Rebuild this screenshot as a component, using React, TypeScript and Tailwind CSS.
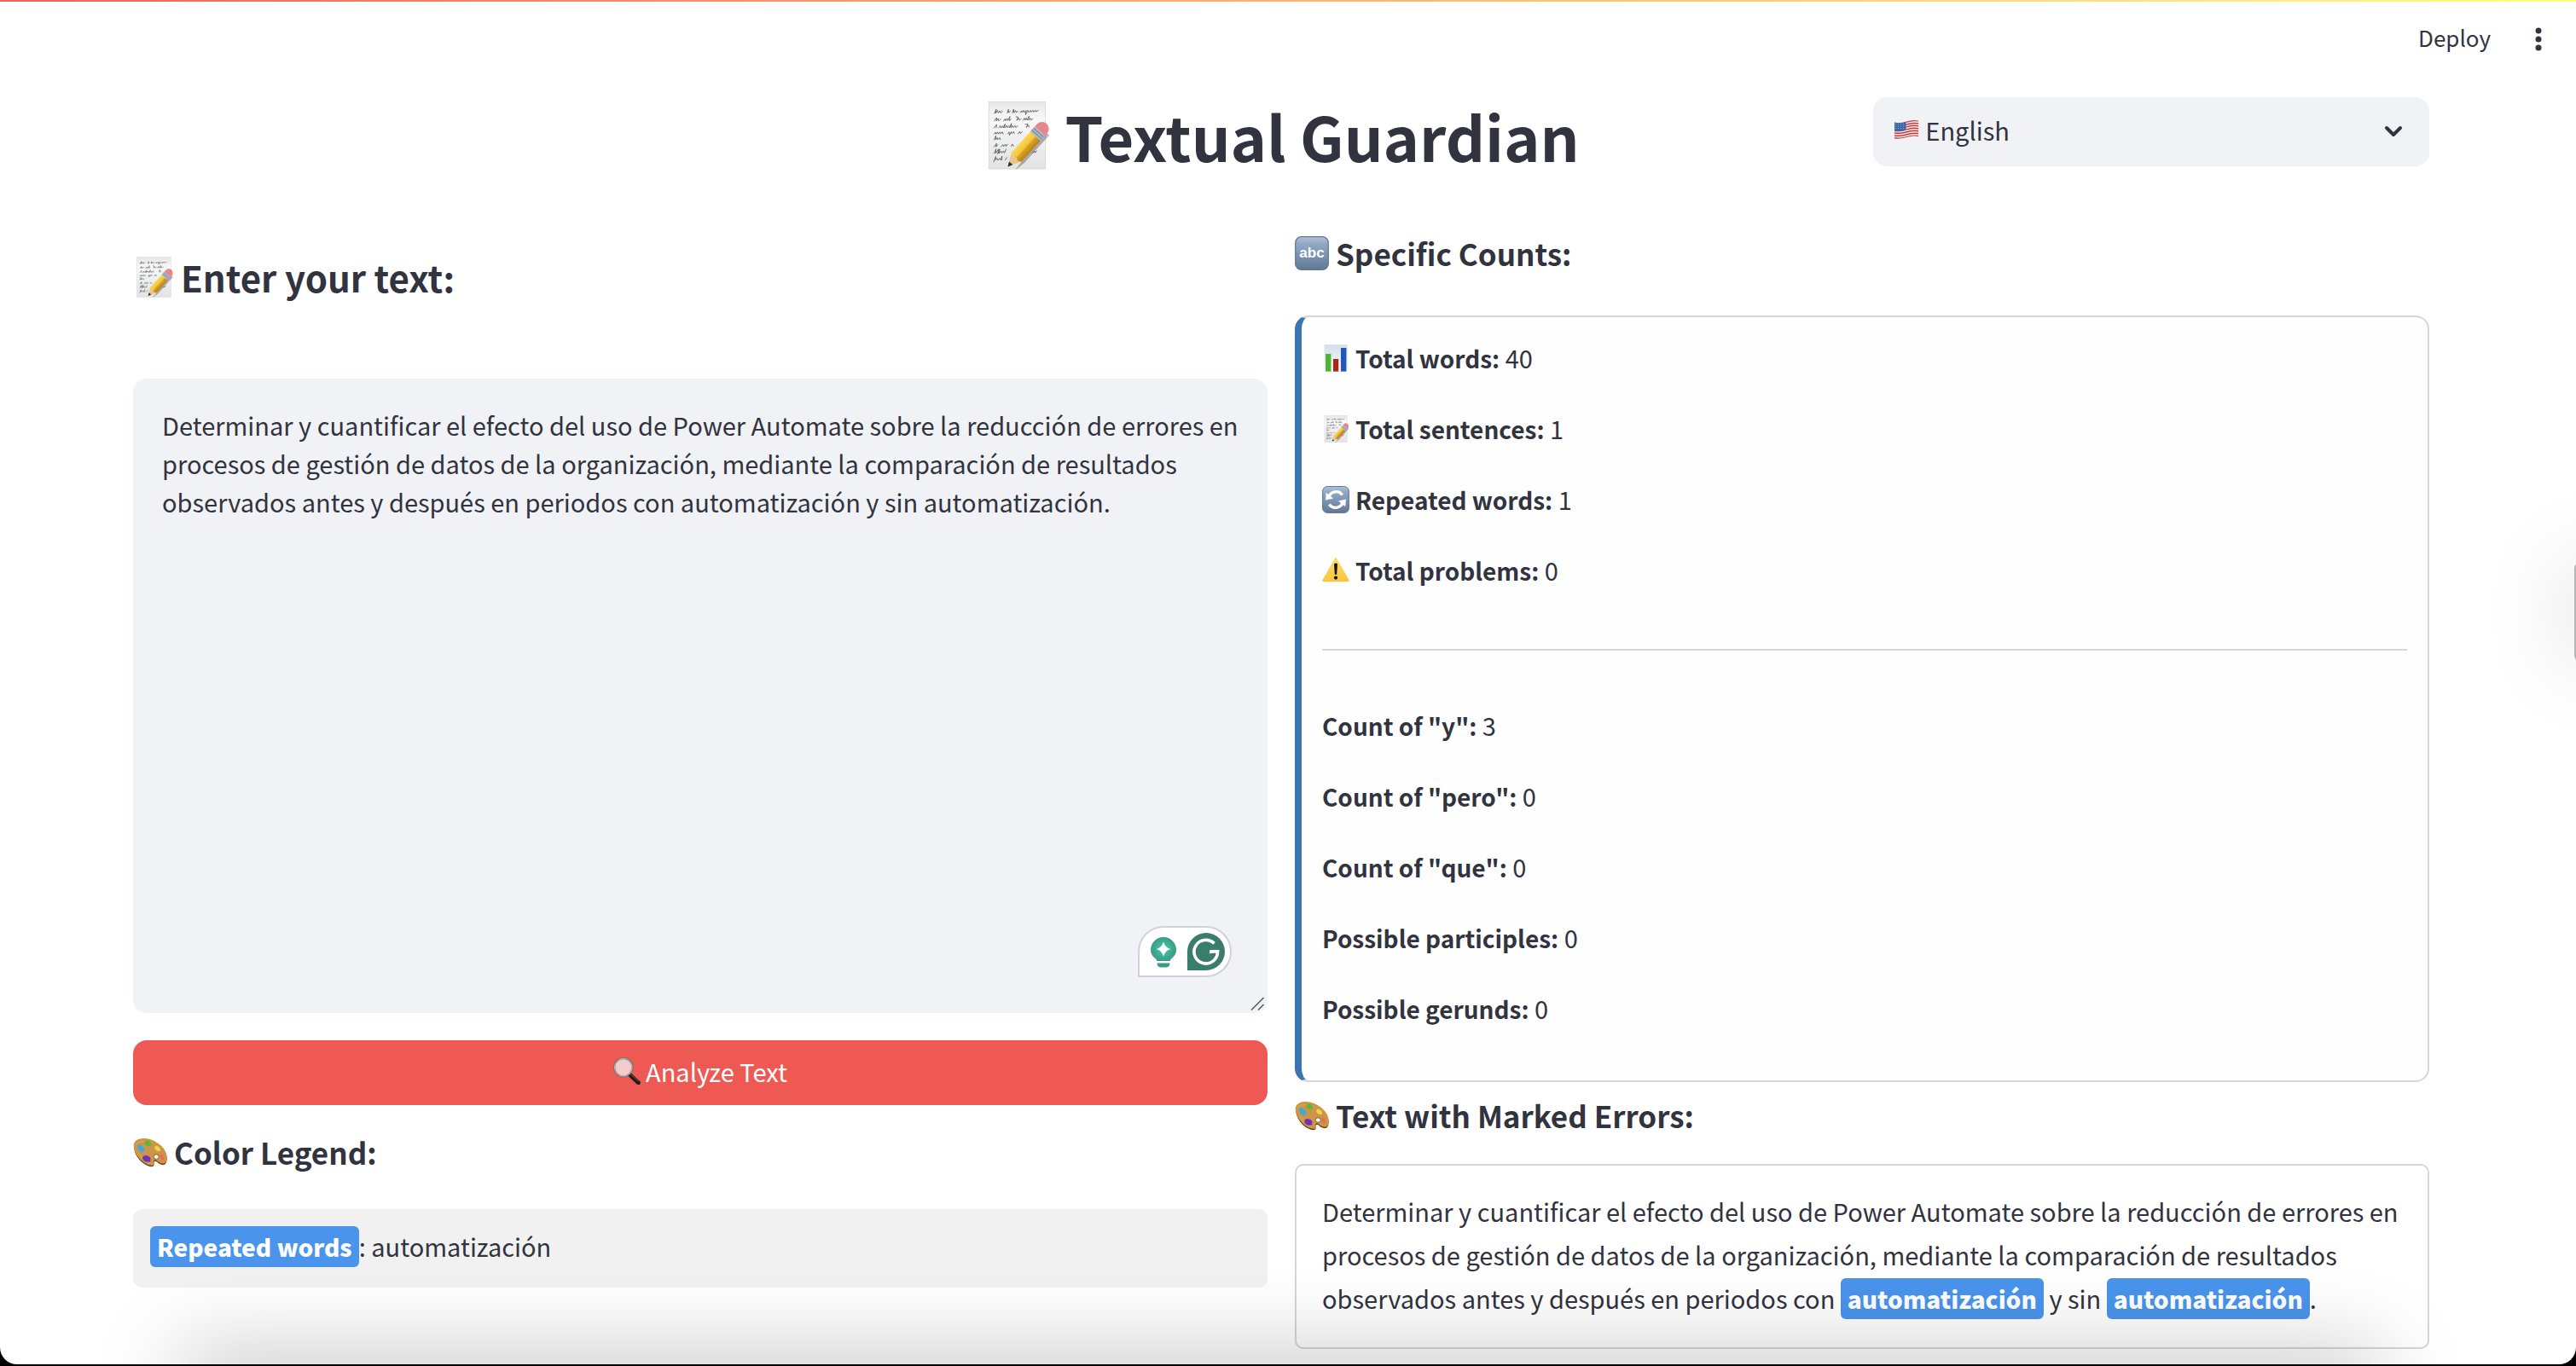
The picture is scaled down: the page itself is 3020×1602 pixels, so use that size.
import React, { useState } from "react";

const SAMPLE =
  "Determinar y cuantificar el efecto del uso de Power Automate sobre la reducción de errores en procesos de gestión de datos de la organización, mediante la comparación de resultados observados antes y después en periodos con automatización y sin automatización.";

type IconProps = { className?: string };

function MemoIcon({ className = "" }: IconProps) {
  return (
    <svg viewBox="0 0 32 32" className={className} aria-hidden="true">
      <defs>
        <linearGradient id="memoPaper" x1="0" y1="0" x2="0" y2="1">
          <stop offset="0" stopColor="#e6e6e6" />
          <stop offset="0.25" stopColor="#f8f8f8" />
          <stop offset="1" stopColor="#e2e3e3" />
        </linearGradient>
        <linearGradient id="memoPencil" x1="0" y1="0" x2="0" y2="1">
          <stop offset="0" stopColor="#fbd955" />
          <stop offset="0.5" stopColor="#f3c23a" />
          <stop offset="0.55" stopColor="#dda428" />
          <stop offset="1" stopColor="#b98018" />
        </linearGradient>
      </defs>
      <rect x="2.9" y="0.2" width="26.6" height="31.4" fill="url(#memoPaper)" stroke="#d3d3d3" strokeWidth="0.3" />
      <g fill="none" stroke="#5a5a5a" strokeWidth="0.34" strokeLinecap="round" strokeLinejoin="round">
        <path d="M5.5 5.6l.9-1.9-.3 1.9.9-1.4.4 1.2.7-1 .4 1 .8-.9M11.5 5.4l.6-1.7.1 1.6.8-.8M14 5.3l.5-1.6.2 1.6.7-1.1.4 1 .8-.6M17.6 5.2l.7-.9.2.9.8-1 .3.9.8-.9-.3 2 1.1-2 .5.9.8-.9.3.8.8-.9.3.8.9-.8.3.7 1-.6" />
        <path d="M5.4 9.1l1.2-1.5-.2 1.6.8-1.2.4 1.1.8-.9M9.8 9.1l.7-1 .3 1 .7-1.2.3 1.1 1-2-.2 2 .7-.7M15.6 7.2l1 .1-.6 1.6.9-1.1.3 1 .9-.7M18.9 8.8l.7-1 .3 1 .6-1.1.4 1.1.8-1.9-.1 1.9.7-1 .4.9.9-.6" />
        <path d="M5.3 12.4l1.3-1.6-.2 1.6M7.6 12.4l.7-1.1.3 1.1.9-1 .2 1 .8-1.9-.2 1.9.9-1.1.3 1 .8-.9.3.9.9-2-.3 2 .8-1 .4 1 .8-1 .3.9 1-.8M20 10.7l1.2-.1-.7 1.6 1-1.1.3.9" />
        <path d="M5.3 15.3l.7-.9.3.9.7-1 .4 1 .8-1 .3.9.8-.9.3.9M11.8 15.2l.6-.9.2 1.6.8-1.7.3.9.8-1 .3.9M16.6 15.1l.8-1 .3 1 .8-.9" />
        <path d="M5.4 18l.8-1.9-.1 1.9.8-1 .3.9.8-.9.4.9" />
        <path d="M5.4 21.3l1.1-1.6-.2 1.6.8-1M8.7 21.2l.8-1 .3.9.9-1 .3 1 .7-1M13.4 21l.6-1 .4.9" />
        <path d="M5.4 24.3l.9-2-.2 2 .8-1 .6-1-.4 2.3.9-2.3-.2 2 .8-1 .4.9.7-1 .5 1 .8-1.8" />
        <path d="M5.2 28.3l1-2.5-.3 1.6.9-.7.3.9.8-.9.4.8.8-1.8-.1 1.8M10.6 27.4l.8-1.1" />
        <path d="M23.5 24.2l.8-1 .3.9.8-1" />
      </g>
      <g transform="translate(11.8 30.6) rotate(-48)">
        <path d="M1 3.6L6.5 4.6H24V2z" fill="#000" opacity="0.28" />
        <path d="M0 0L6.2-3.2V3.2z" fill="#e9c48e" />
        <path d="M0 0L2.2-1.15V1.15z" fill="#2b2b2b" />
        <path d="M6-3.2H19.3V3.2H6l-.8-1.6.6-1.6-.6-1.6z" fill="url(#memoPencil)" />
        <rect x="19.3" y="-3.2" width="3.2" height="6.4" fill="#a9b4c4" />
        <path d="M20.3-3.2v6.4M21.5-3.2v6.4" stroke="#7d899c" strokeWidth="0.4" />
        <path d="M22.5-3.2h1.5a3.2 3.2 0 0 1 0 6.4h-1.5z" fill="#e8868c" />
      </g>
    </svg>
  );
}

function BlueKey({ className = "", children }: IconProps & { children: React.ReactNode }) {
  return (
    <svg viewBox="0 0 40 40" className={className} aria-hidden="true">
      <defs>
        <linearGradient id="blueKey" x1="0" y1="0" x2="0" y2="1">
          <stop offset="0" stopColor="#b0c2d8" />
          <stop offset="0.2" stopColor="#93a9c5" />
          <stop offset="0.75" stopColor="#6f88a6" />
          <stop offset="1" stopColor="#617893" />
        </linearGradient>
      </defs>
      <rect x="0.7" y="0.7" width="38.6" height="38.6" rx="7" fill="url(#blueKey)" stroke="#5e7693" strokeWidth="1.2" />
      {children}
    </svg>
  );
}

function AbcIcon({ className }: IconProps) {
  return (
    <BlueKey className={className}>
      <text x="20" y="25" textAnchor="middle" fontSize="17" fontWeight="700" fill="#fff" fontFamily="'Liberation Sans', sans-serif">
        abc
      </text>
    </BlueKey>
  );
}

function RefreshIcon({ className }: IconProps) {
  return (
    <BlueKey className={className}>
      <g fill="none" stroke="#fff" strokeWidth="4.2">
        <path d="M9.4 17A11.4 11.4 0 0 1 29.6 13" />
        <path d="M30.6 23A11.4 11.4 0 0 1 10.4 27" />
      </g>
      <path d="M5.2 20.6L5.8 9.8L16.4 18.2z" fill="#fff" />
      <path d="M34.8 19.4L34.2 30.2L23.6 21.8z" fill="#fff" />
    </BlueKey>
  );
}

function ChartIcon({ className = "" }: IconProps) {
  return (
    <svg viewBox="0 0 32 32" className={className} aria-hidden="true">
      <defs>
        <linearGradient id="chartBg" x1="0" y1="0" x2="0" y2="1">
          <stop offset="0" stopColor="#d5e0ea" />
          <stop offset="1" stopColor="#f6f9fb" />
        </linearGradient>
      </defs>
      <rect x="2.9" y="0.3" width="26.4" height="31.3" fill="url(#chartBg)" stroke="#cfd6dc" strokeWidth="0.4" />
      <rect x="4" y="11" width="6.4" height="20.6" fill="#4fb435" />
      <rect x="13" y="17" width="6.2" height="14.6" fill="#b02318" />
      <rect x="22" y="4" width="6.4" height="27.6" fill="#2456b8" />
    </svg>
  );
}

function WarningIcon({ className = "" }: IconProps) {
  return (
    <svg viewBox="0 0 32 32" className={className} aria-hidden="true">
      <defs>
        <linearGradient id="warn" x1="0" y1="0" x2="0" y2="1">
          <stop offset="0" stopColor="#fde06a" />
          <stop offset="1" stopColor="#f9c440" />
        </linearGradient>
      </defs>
      <path d="M14.6 2.3q1.4-2.4 2.8 0l14 24.6q1 2.2-1.2 2.3H1.8q-2.2-.1-1.2-2.3z" fill="url(#warn)" />
      <path d="M14 8.2q2-1.6 4 0l-.8 12.3q-1.2.9-2.4 0z" fill="#161616" />
      <circle cx="16" cy="24.6" r="2.1" fill="#161616" />
    </svg>
  );
}

function PaletteIcon({ className = "" }: IconProps) {
  return (
    <svg viewBox="0 0 40 40" className={className} aria-hidden="true">
      <path
        d="M1.2 15.5C.4 8.600 5.500 4.800 12.500 4.700C21 4.600 30 9.500 35.500 16.500C39.500 21.700 41 28.500 38.400 33.200C37 35.800 33.500 35.600 31 34C29 32.700 27.500 30.400 25.400 31C23.400 31.600 25.400 34.200 24.300 36C22.500 38.600 16.500 36.500 12.300 33.500C6.500 29.300 1.900 22.500 1.200 15.500z"
        fill="#6b4114"
      />
      <path
        d="M.8 14C0 7.600 5 4 12 3.900C20.500 3.800 30 8.500 35.500 15.500C39.500 20.700 41 27.500 38.600 31.800C37.200 34.200 33.700 34.200 31.200 32.600C29.200 31.300 27.200 28.800 25 29.600C22.800 30.400 25.400 33 24.300 34.800C22.500 37.200 16.500 35 12.300 32C6.500 27.800 1.500 21 .8 14z"
        fill="#cd9545"
      />
      <path d="M3 12c3-5 12-6 20-2M6 21c5 8 9 10 14 12" fill="none" stroke="#e0b267" strokeWidth="1" opacity="0.7" />
      <ellipse cx="27.2" cy="25.600" rx="3" ry="2.700" fill="#fff" stroke="#7a4d1b" strokeWidth="0.8" />
      <path d="M5 13.500q.5-3 3-2.500l2.500 2q3 1.500 3.200 4.500q-1.500 3.500-4.500 2.500q-3.700-1.500-4.200-6.500z" fill="#3fa9dc" />
      <path d="M13.500 8q1.500-2.500 4.500-1.200q4 2.200 3.300 5q-2.500 2.200-5.300.8q-2.800-1.600-2.500-4.600z" fill="#5cb83c" />
      <path d="M25.500 13.500q2-2 4 0q3.200 2 2.500 5q-2.500 1.500-5-.5q-2.500-2-1.500-4.500z" fill="#f0d248" />
      <path d="M32 22.500q1.800-.5 3.200 2.300q1.700 3 .6 5.200q-2 0-3.600-2.500q-1.400-3-.2-5z" fill="#ee6a5c" />
      <path d="M11.500 25.500q1.500-2 3.500-1.500q4.500.5 5.500 3.500l-.4 4q-4 1-7-1q-2.600-2.200-1.600-5z" fill="#7330b8" />
    </svg>
  );
}

function MagnifierIcon({ className = "" }: IconProps) {
  return (
    <svg viewBox="0 0 32 32" className={className} aria-hidden="true">
      <path d="M19.500 20.500L29.500 30" stroke="#1d1d1d" strokeWidth="4.600" strokeLinecap="round" />
      <path d="M20.500 20L29 28" stroke="#5a5a5a" strokeWidth="1" strokeLinecap="round" />
      <circle cx="11.800" cy="11.800" r="10.600" fill="#f2cdcc" stroke="#6f6f6f" strokeWidth="2" />
      <circle cx="11.800" cy="11.800" r="10.300" fill="none" stroke="#c4c4c4" strokeWidth="1" />
    </svg>
  );
}

function FlagIcon({ className = "" }: IconProps) {
  const stripes = [0, 1, 2, 3, 4, 5, 6];
  return (
    <svg viewBox="0 0 30 24" className={className} aria-hidden="true">
      <clipPath id="flagClip">
        <path d="M1 3.500Q8 5 15 2.500T29 1.500V20Q22 18.500 15 21T1 22.500z" />
      </clipPath>
      <g clipPath="url(#flagClip)">
        <rect width="30" height="24" fill="#f4f0ee" />
        {stripes.map((i) => (
          <path
            key={i}
            d="M0 4Q8 5.500 15 3T30 2"
            transform={`translate(0 ${i * 2.95})`}
            fill="none"
            stroke="#c8383c"
            strokeWidth="1.500"
          />
        ))}
        <path d="M0 2.500Q8 5 14.500 2V12.500Q8 15 0 14z" fill="#3f67a4" />
        <g fill="#a9bedb">
          {[5.5, 8, 10.500].map((y) =>
            [2.500, 5.500, 8.500, 11.500].map((x) => <circle key={`${x}-${y}`} cx={x} cy={y} r="0.500" />)
          )}
        </g>
      </g>
    </svg>
  );
}

function WritingAssistant() {
  return (
    <div className="absolute right-[42px] bottom-[42px] flex h-15 w-[110px] items-center gap-3 rounded-full rounded-bl-none border-2 border-[#d0d0de] bg-white pl-3">
      <button type="button" aria-label="Suggestions">
        <svg viewBox="0 0 32 40" className="h-10 w-8">
          <defs>
            <radialGradient id="bulb">
              <stop offset="0" stopColor="#4ac9a8" />
              <stop offset="1" stopColor="#3a9c85" />
            </radialGradient>
          </defs>
          <path d="M16 3a15 15 0 0 0-15 15c0 5 3 8 6 10.500q1 1 1.200 2.500H23.800q.2-1.500 1.200-2.500C28 26 31 23 31 18A15 15 0 0 0 16 3z" fill="url(#bulb)" />
          <path d="M8.500 33.500h15q-.3 5-4.500 5h-6q-4.200 0-4.500-5z" fill="#3a9c85" />
          <path d="M16 8.500q2 7 8.500 8.500q-6.500 1.500-8.500 8.500q-2-7-8.500-8.500q6.500-1.500 8.500-8.500z" fill="#fff" />
        </svg>
      </button>
      <button type="button" aria-label="Check writing">
        <svg viewBox="0 0 44 44" className="size-11">
          <path d="M0 44V22A22 22 0 1 1 22 44z" fill="#3a7d6d" />
          <path d="M31.500 12.500A13.800 13.800 0 1 0 35.500 22H26" fill="none" stroke="#fff" strokeWidth="3.600" />
          <path d="M25.500 24.500L28 20.200H37.300V22.500H34z" fill="#fff" />
        </svg>
      </button>
    </div>
  );
}

function Mark({ children }: { children: React.ReactNode }) {
  return (
    <mark className="inline-block rounded-md bg-[#4a94ec] px-2 text-[28px] leading-[48px] font-black text-white">
      {children}
    </mark>
  );
}

function SectionHeading({ icon, children }: { icon: React.ReactNode; children: React.ReactNode }) {
  return (
    <h3 className="flex items-center gap-2 text-[35px] leading-[48px] font-bold">
      {icon}
      {children}
    </h3>
  );
}

function Stat({ icon, label, value }: { icon?: React.ReactNode; label: string; value: number }) {
  return (
    <p className="flex h-[51px] items-center gap-[7px]">
      {icon}
      <span>
        <strong className="text-[28px] font-bold">{label}</strong> {value}
      </span>
    </p>
  );
}

export default function App() {
  const [text, setText] = useState(SAMPLE);
  const [language, setLanguage] = useState("en");

  return (
    <div className="min-h-screen overflow-hidden bg-black font-['Noto_Sans_CJK_SC','Noto_Sans',sans-serif] text-[29px] leading-[51px] text-[#31333f]">
      <div className="relative mb-0.5 min-h-[calc(100vh-2px)] overflow-hidden rounded-b-[20px] bg-white">
        <div className="h-0.5 bg-linear-to-r from-[#f0625c] to-[#fdfb86]" />
        <header className="flex h-[88px] items-center justify-end gap-12 pr-9">
          <button type="button" className="pb-1 text-[26px] leading-10">
            Deploy
          </button>
          <button type="button" aria-label="Menu">
            <svg viewBox="0 0 16 32" className="h-8 w-4" fill="currentColor">
              <circle cx="8" cy="6" r="3.500" />
              <circle cx="8" cy="16" r="3.500" />
              <circle cx="8" cy="26" r="3.500" />
            </svg>
          </button>
        </header>

        <main className="pt-6 pr-[172px] pb-4 pl-[156px]">
          <div className="flex gap-8">
            <div className="flex-[1_1_calc(25%-32px)]" />
            <h1 className="flex flex-[1_1_calc(50%-32px)] items-center justify-center gap-4 text-[72px] leading-[90px] font-bold whitespace-nowrap">
              <MemoIcon className="size-20" />
              Textual Guardian
            </h1>
            <div className="flex-[1_1_calc(25%-32px)]">
              <div className="relative h-[81px]">
                <select
                  aria-label="Language"
                  value={language}
                  onChange={(e) => setLanguage(e.target.value)}
                  className="h-full w-full appearance-none rounded-2xl bg-[#f0f2f6] pb-1 pl-[61px]"
                >
                  <option value="en">English</option>
                  <option value="es">Español</option>
                </select>
                <FlagIcon className="pointer-events-none absolute top-[26px] left-6 h-6 w-[30px]" />
                <svg
                  viewBox="0 0 24 16"
                  className="pointer-events-none absolute top-8 right-[30px] h-4 w-6"
                  fill="none"
                  stroke="currentColor"
                  strokeWidth="4"
                  strokeLinecap="round"
                  strokeLinejoin="round"
                >
                  <path d="M4 4l8 8 8-8" />
                </svg>
              </div>
            </div>
          </div>

          <div className="mt-[42px] flex gap-8">
            <section className="min-w-0 flex-1 pt-[50px]">
              <h2 className="text-[42px] leading-[58px] font-bold">
                <label htmlFor="entry" className="flex items-center gap-2">
                  <MemoIcon className="size-12" />
                  Enter your text:
                </label>
              </h2>
              <div className="relative mt-[90px]">
                <textarea
                  id="entry"
                  value={text}
                  onChange={(e) => setText(e.target.value)}
                  spellCheck={false}
                  className="block h-[744px] w-full resize-none rounded-2xl bg-[#f0f2f6] px-[34px] py-8 leading-[45px]"
                />
                <WritingAssistant />
                <svg viewBox="0 0 16 16" className="absolute right-1 bottom-[3px] size-4" stroke="#555" strokeWidth="1.500">
                  <path d="M1 15.500L15.500 1M9 15.500L15.500 9" />
                </svg>
              </div>
              <button
                type="button"
                className="mt-8 flex h-[76px] w-full items-center justify-center gap-1.5 rounded-2xl bg-[#ee5a53] pb-1 text-white"
              >
                <MagnifierIcon className="size-8" />
                Analyze Text
              </button>
              <div className="mt-[31px]">
                <SectionHeading icon={<PaletteIcon className="size-10" />}>Color Legend:</SectionHeading>
              </div>
              <p className="mt-[43px] rounded-[10px] bg-[#f1f1f1] px-5 pt-[18px] pb-[23px]">
                <Mark>Repeated words</Mark>: automatización
              </p>
            </section>

            <section className="min-w-0 flex-1 pt-[27px]">
              <SectionHeading icon={<AbcIcon className="size-10" />}>Specific Counts:</SectionHeading>
              <div className="mt-[49px] rounded-2xl border-2 border-l-8 border-[#d6d6d9] border-l-[#3b75b1] bg-[#fefefe] px-6 pt-[22px] pb-[59px]">
                <div className="flex flex-col gap-8">
                  <Stat icon={<ChartIcon className="size-8" />} label="Total words:" value={40} />
                  <Stat icon={<MemoIcon className="size-8" />} label="Total sentences:" value={1} />
                  <Stat icon={<RefreshIcon className="size-8" />} label="Repeated words:" value={1} />
                  <Stat icon={<WarningIcon className="size-8" />} label="Total problems:" value={0} />
                </div>
                <hr className="mt-[67px] mb-[62px] border-t-2 border-[#d6d6d9]" />
                <div className="flex flex-col gap-8">
                  <Stat label={'Count of "y":'} value={3} />
                  <Stat label={'Count of "pero":'} value={0} />
                  <Stat label={'Count of "que":'} value={0} />
                  <Stat label="Possible participles:" value={0} />
                  <Stat label="Possible gerunds:" value={0} />
                </div>
              </div>
              <div className="mt-[15px]">
                <SectionHeading icon={<PaletteIcon className="size-10" />}>Text with Marked Errors:</SectionHeading>
              </div>
              <p className="mt-[33px] rounded-[10px] border-2 border-[#d6d6d9] px-[30px] pt-7 pb-8">
                Determinar y cuantificar el efecto del uso de Power Automate sobre la reducción de errores en procesos
                de gestión de datos de la organización, mediante la comparación de resultados observados antes y
                después en periodos con <Mark>automatización</Mark> y sin <Mark>automatización</Mark>.
              </p>
            </section>
          </div>
        </main>

        <div className="pointer-events-none absolute right-[240px] -bottom-10 left-[220px] h-10 shadow-[0_0_100px_10px_rgba(0,0,0,0.28)]" />
        <div className="pointer-events-none absolute top-[660px] -right-[38px] h-[115px] w-10 rounded-md bg-[#b5b5b5] shadow-[0_0_100px_10px_rgba(0,0,0,0.12)]" />
      </div>
    </div>
  );
}
